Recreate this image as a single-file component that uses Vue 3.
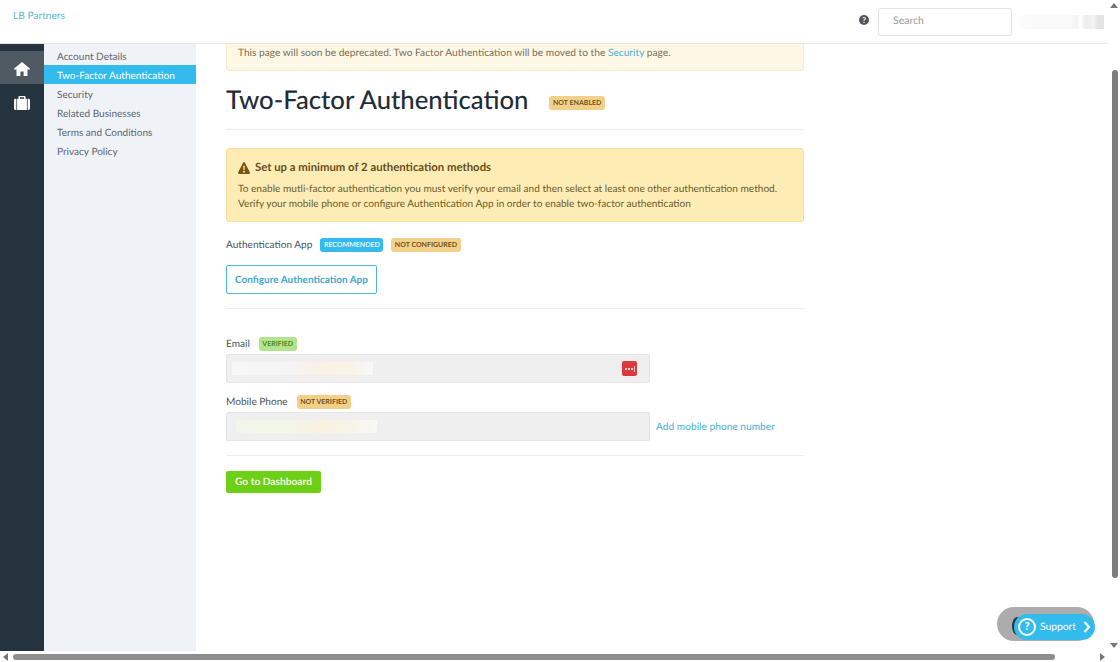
<template>
  <div class="page">
    <div class="top-area">
      <div class="content-col">
        <header class="topbar">
          <a class="brand">LB Partners</a>
          <div class="top-right">
            <span class="help-dot">?</span>
            <div class="search">Search</div>
            <div class="user-blur"></div>
          </div>
        </header>
        <div class="body-row">
          <nav class="rail">
            <div class="rail-item active">
              <svg width="16" height="14" viewBox="0 0 16 14"><path d="M8 0 .2 6.600c-.4.4-.1 1 .4 1h1.900V14h3.900V9.600h3.200V14h3.900V7.600h1.900c.5 0 .8-.6.4-1z" fill="#fff"/></svg>
            </div>
            <div class="rail-item">
              <svg width="16" height="14" viewBox="0 0 16 14"><path d="M4.500 2.800V1c0-.6.400-1 1-1h5c.6 0 1 .4 1 1v1.800h3C15.400 2.800 16 3.400 16 4.200v8.400c0 .8-.6 1.400-1.500 1.400h-13C.6 14 0 13.400 0 12.600V4.200c0-.8.6-1.400 1.500-1.400zM6 2.800h4V1.300H6zM2.400 2.800V14h.7V2.800zM12.900 2.800V14h.7V2.800z" fill="#fff" fill-rule="evenodd"/></svg>
            </div>
          </nav>
          <aside class="subnav">
            <a v-for="item in navItems" :key="item" class="subnav-item" :class="{ selected: item === 'Two-Factor Authentication' }">{{ item }}</a>
          </aside>
          <main class="main">
            <div class="notice">
              This page will soon be deprecated. Two Factor Authentication will be moved to the <a class="link">Security</a> page.
            </div>
            <div class="title-row">
              <h1>Two-Factor Authentication</h1>
              <span class="badge orange title-badge">NOT ENABLED</span>
            </div>
            <div class="warning">
              <div class="warning-title">
                <svg width="12" height="12" viewBox="0 0 13 12" preserveAspectRatio="none"><path d="M6.500 0c.4 0 .7.200.9.500l5.400 9.800c.4.700-.1 1.700-.9 1.700H1.100C.3 12-.2 11 .2 10.300L5.600.5C5.800.2 6.100 0 6.500 0zM5.700 3.800l.2 4.300h1.200l.2-4.300zM6.500 8.800a1 1 0 1 0 0 2 1 1 0 0 0 0-2z" fill="#7a5414" fill-rule="evenodd"/></svg>
                Set up a minimum of 2 authentication methods
              </div>
              <p>To enable mutli-factor authentication you must verify your email and then select at least one other authentication method.<br />Verify your mobile phone or configure Authentication App in order to enable two-factor authentication</p>
            </div>
            <div class="label-row auth-label">
              <span class="label">Authentication App</span>
              <span class="badge blue">RECOMMENDED</span>
              <span class="badge orange">NOT CONFIGURED</span>
            </div>
            <button class="outline-btn">Configure Authentication App</button>
            <hr class="rule" />
            <div class="label-row">
              <span class="label">Email</span>
              <span class="badge green">VERIFIED</span>
            </div>
            <div class="field-row">
              <div class="field">
                <div class="blur-text email-blur"></div>
                <span class="pw-icon"><i></i><i></i><i></i><b></b></span>
              </div>
            </div>
            <div class="label-row phone-label">
              <span class="label">Mobile Phone</span>
              <span class="badge orange">NOT VERIFIED</span>
            </div>
            <div class="field-row">
              <div class="field">
                <div class="blur-text phone-blur"></div>
              </div>
              <a class="link add-phone">Add mobile phone number</a>
            </div>
            <hr class="rule bottom-rule" />
            <button class="green-btn">Go to Dashboard</button>
          </main>
        </div>
      </div>
      <div class="vscroll">
        <span class="arrow up"></span>
        <div class="vtrack"><div class="vthumb"></div></div>
        <span class="arrow down"></span>
      </div>
    </div>
    <div class="hscroll">
      <span class="arrow left"></span>
      <div class="htrack"><div class="hthumb"></div></div>
      <span class="arrow right"></span>
    </div>

    <div class="support-back"><span class="peek"></span></div>
    <div class="support">
      <span class="support-icon">?</span>
      <span>Support</span>
      <svg width="8" height="12" viewBox="0 0 8 12"><path d="M1.500 1 6 6l-4.500 5" fill="none" stroke="#fff" stroke-width="2.200"/></svg>
    </div>
  </div>
</template>

<script setup>
const navItems = [
  'Account Details',
  'Two-Factor Authentication',
  'Security',
  'Related Businesses',
  'Terms and Conditions',
  'Privacy Policy'
]
</script>

<style>
html, body {
  margin: 0;
  overflow: hidden;
  background: #fff;
}
</style>

<style scoped>
.page {
  width: 1120px;
  height: 662px;
  position: relative;
  overflow: hidden;
  display: flex;
  flex-direction: column;
  font-family: Lato, "Open Sans", sans-serif;
  font-size: 10.100px;
  text-rendering: geometricPrecision;
  color: #5c626b;
  background: #fff;
}
.top-area {
  display: flex;
  height: 651px;
}
.content-col {
  width: 1108px;
  display: flex;
  flex-direction: column;
}
.topbar {
  height: 43px;
  border-bottom: 1px solid #e8e8e8;
  display: flex;
  justify-content: space-between;
  padding: 0 4px 0 13px;
}
.brand {
  color: #5cb8d6;
  font-size: 10.200px;
  line-height: 32px;
}
.top-right {
  display: flex;
  align-items: flex-start;
}
.help-dot {
  width: 10px;
  height: 10px;
  border-radius: 50%;
  background: #555;
  color: #fff;
  font-size: 8px;
  font-weight: 700;
  line-height: 10px;
  text-align: center;
  margin: 15px 9px 0 0;
}
.search {
  height: 26px;
  border: 1px solid #e2e2e2;
  border-radius: 3px;
  margin-top: 8px;
  padding-left: 14px;
  width: 118px;
  color: #999;
  font-size: 10.500px;
  line-height: 24px;
}
.user-blur {
  width: 84px;
  height: 14px;
  margin: 15px 0 0 8px;
  background: linear-gradient(90deg, #fbfbfb 0, #f9f9f9 60%, #f2f2f2 68%, #fff 72%, #ececec 78%, #f4f4f4 88%, #e4e4e4 92%, #e4e4e4 100%);
}
.body-row {
  flex: 1;
  display: flex;
  min-height: 0;
}
.rail {
  width: 44px;
  background: #25333f;
  padding-top: 7px;
  flex: none;
}
.rail-item {
  height: 33px;
  box-sizing: border-box;
  padding-top: 2px;
  display: flex;
  align-items: center;
  justify-content: center;
  margin-bottom: 1px;
}
.rail-item.active {
  background: #4f5a62;
}
.subnav {
  width: 152px;
  flex: none;
  background: #eff3f8;
  padding-top: 2px;
}
.subnav-item {
  display: block;
  height: 19px;
  box-sizing: border-box;
  padding: 2px 0 0 13px;
  line-height: 19px;
  font-size: 10.050px;
  color: #5f6670;
}
.subnav-item.selected {
  background: #33bbed;
  color: #fff;
}
.main {
  flex: 1;
  padding: 0 304px 0 30px;
  box-sizing: border-box;
}
.notice {
  height: 27px;
  box-sizing: border-box;
  background: #fdf8e6;
  border: 1px solid #f5ecd0;
  border-top: 0;
  border-radius: 0 0 3px 3px;
  padding-left: 11px;
  font-size: 10.200px;
  line-height: 19px;
  color: #7c6f56;
}
.link {
  color: #4eb0d4;
}
.title-row {
  display: flex;
  align-items: center;
  height: 58px;
  border-bottom: 1px solid #eeeeee;
}
h1 {
  margin: 0 21px 0 0;
  font-size: 25.700px;
  font-weight: 500;
  color: #1f2d3a;
}
.badge {
  height: 14px;
  border-radius: 3px;
  padding: 0 3.500px;
  font-size: 7px;
  line-height: 14px;
  font-weight: 700;
}
.title-badge {
  margin-top: 5px;
}
.badge.orange {
  background: #f3d08a;
  color: #6e5420;
}
.badge.blue {
  background: #33bbed;
  color: #e3f6fd;
}
.badge.green {
  background: #b2e48e;
  color: #4a8a26;
}
.warning {
  margin-top: 18px;
  height: 74px;
  box-sizing: border-box;
  background: #fdedb5;
  border: 1px solid #f3dfa0;
  border-radius: 3px;
  padding: 12px 11px 0;
  color: #6f5a2a;
}
.warning-title {
  display: flex;
  align-items: center;
  gap: 5px;
  font-size: 11.350px;
  font-weight: 700;
  color: #6a4e18;
  margin-bottom: 8px;
}
.warning p {
  margin: 0;
  line-height: 15px;
}
.label-row {
  display: flex;
  align-items: center;
  gap: 9px;
  height: 16px;
  margin-top: 1px;
}
.auth-label {
  margin-top: 15px;
  gap: 8px;
}
.phone-label {
  margin-top: 11px;
}
.label {
  color: #4d535c;
}
.outline-btn {
  display: block;
  margin-top: 12px;
  width: 151px;
  height: 29px;
  background: #fff;
  border: 1px solid #4eb7d6;
  border-radius: 2px;
  color: #3fa9cf;
  font: 700 10px Lato, sans-serif;
  text-rendering: geometricPrecision;
  padding: 1px 0 0;
}
.rule {
  border: 0;
  border-top: 1px solid #eeeeee;
  margin: 14px 0 27px;
}
.field-row {
  display: flex;
  align-items: center;
  margin-top: 2px;
}
.field {
  width: 424px;
  height: 29px;
  box-sizing: border-box;
  background: #efefef;
  border: 1px solid #e5e5e5;
  border-radius: 2px;
  display: flex;
  align-items: center;
  justify-content: space-between;
  padding-right: 12px;
  flex: none;
}
.blur-text {
  height: 13px;
}
.email-blur {
  width: 141px;
  margin-left: 5px;
  background: linear-gradient(90deg, #f7f7f7 0, #f5f5f5 40%, #f8f1e6 60%, #f8f3e8 85%, #f8f8f8 100%);
}
.phone-blur {
  width: 141px;
  margin-left: 9px;
  background: linear-gradient(90deg, #eff7ea 0, #f3f6e8 35%, #f8f2df 60%, #f6f4e8 80%, #f8f8f8 100%);
}
.pw-icon {
  width: 15px;
  height: 15px;
  background: #dc3a3a;
  border-radius: 2px;
  display: flex;
  align-items: center;
  justify-content: center;
  gap: 1px;
}
.pw-icon i {
  width: 2px;
  height: 2px;
  border-radius: 50%;
  background: #fff;
}
.pw-icon b {
  width: 1px;
  height: 6px;
  background: #f5c5c5;
}
.add-phone {
  margin-left: 6px;
  white-space: nowrap;
  font-size: 10.200px;
}
.bottom-rule {
  margin: 14px 0 15px;
}
.green-btn {
  display: block;
  width: 95px;
  height: 22px;
  border: 0;
  border-radius: 2px;
  background: #6dd016;
  color: #f0fbe6;
  font: 700 10.200px Lato, sans-serif;
  text-rendering: geometricPrecision;
  padding: 0;
}
.vscroll {
  width: 12px;
  display: flex;
  flex-direction: column;
  align-items: center;
}
.vtrack {
  flex: 1;
  width: 100%;
  padding-top: 62px;
}
.vthumb {
  width: 6px;
  height: 508px;
  margin-left: 4px;
  background: #7d7d7d;
  border-radius: 3px;
}
.hscroll {
  width: 1108px;
  height: 11px;
  display: flex;
  align-items: center;
}
.htrack {
  flex: 1;
  padding-left: 5px;
}
.hthumb {
  width: 1042px;
  height: 6px;
  background: #8e8e8e;
  border-radius: 3px;
}
.arrow {
  width: 0;
  height: 0;
  display: block;
  flex: none;
  border: 4px solid transparent;
}
.arrow.up {
  border-bottom: 5px solid #777;
  border-top: 0;
  margin-top: 3px;
}
.arrow.down {
  border-top: 5px solid #777;
  border-bottom: 0;
  margin-bottom: 3px;
}
.arrow.left {
  border-right: 5px solid #777;
  border-left: 0;
  margin-left: 3px;
}
.arrow.right {
  border-left: 5px solid #777;
  border-right: 0;
  margin-right: 3px;
}
.support-back {
  position: absolute;
  left: 997px;
  top: 607px;
  width: 97px;
  height: 34px;
  border-radius: 17px;
  background: #acacac;
}
.peek {
  position: absolute;
  left: 15px;
  top: 10px;
  width: 10px;
  height: 18px;
  border-radius: 50%;
  background: #27353f;
}
.support {
  position: absolute;
  left: 1014px;
  top: 614px;
  width: 81px;
  height: 26px;
  box-sizing: border-box;
  border-radius: 13px;
  background: #33bbed;
  color: #fff;
  display: flex;
  align-items: center;
  padding-left: 4px;
  font-size: 10.300px;
}
.support-icon {
  width: 14px;
  height: 14px;
  border: 2px solid #fff;
  border-radius: 50%;
  font-size: 11px;
  font-weight: 900;
  line-height: 14px;
  text-align: center;
  margin-right: 4px;
}
.support svg {
  margin-left: 7px;
}
</style>
